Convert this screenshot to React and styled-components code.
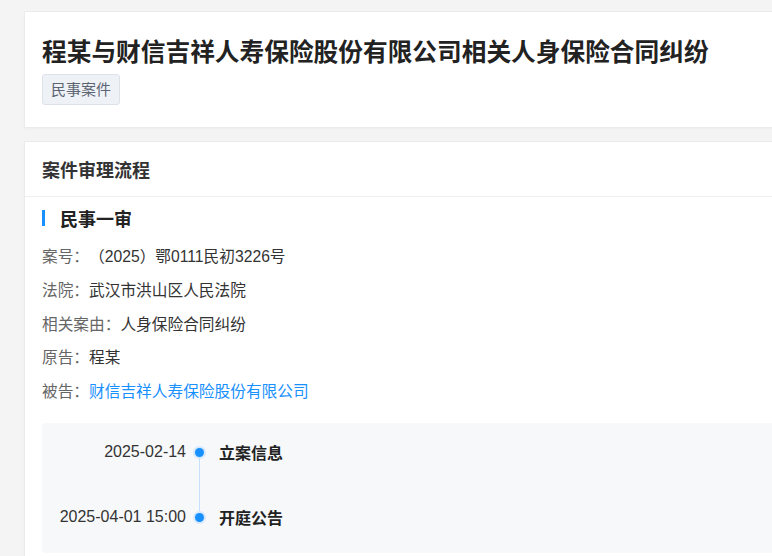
import React from "react";
import styled, { createGlobalStyle } from "styled-components";

const GlobalStyle = createGlobalStyle`
  html, body {
    margin: 0;
    padding: 0;
    background: #f4f4f4;
    overflow: hidden;
    font-family: "Liberation Sans", "Noto Sans CJK SC", sans-serif;
    color: #333;
  }
`;

const Page = styled.div`
  width: 820px;
  padding: 11px 0 0 24px;
  display: flex;
  flex-direction: column;
  gap: 13px;
`;

const Card = styled.section`
  background: #fff;
  border: 1px solid #ebebeb;
  box-shadow: 0 1px 2px rgba(0, 0, 0, 0.03);
`;

const TitleBlock = styled.div`
  padding: 24px 17px 22px;
  display: flex;
  flex-direction: column;
  align-items: flex-start;
  gap: 4px;
`;

const CaseTitle = styled.h1`
  margin: 0;
  font-size: 24.7px;
  line-height: 34px;
  font-weight: 700;
  color: #222;
`;

const Tag = styled.span`
  display: inline-block;
  padding: 0 8px;
  height: 29px;
  line-height: 29px;
  font-size: 15px;
  color: #5d6573;
  background: #eef1f6;
  border: 1px solid #dde2ea;
  border-radius: 3px;
`;

const CardHeader = styled.div`
  height: 53px;
  padding: 0 17px 1px;
  display: flex;
  align-items: center;
  font-size: 18px;
  font-weight: 700;
  color: #333;
  border-bottom: 1px solid #efefef;
`;

const CardBody = styled.div`
  padding: 9px 0 20px 17px;
`;

const StageTitle = styled.h2`
  margin: 0;
  height: 24px;
  display: flex;
  align-items: center;
  gap: 15px;
  font-size: 18px;
  font-weight: 700;
  color: #222;

  &::before {
    content: "";
    width: 3px;
    height: 16px;
    background: #1890ff;
  }
`;

const InfoList = styled.dl`
  margin: 9px 0 0;
  display: flex;
  flex-direction: column;
`;

const InfoRow = styled.div`
  display: flex;
  height: 33.7px;
  align-items: center;
  font-size: 15.7px;
`;

const Label = styled.dt`
  color: #666;
`;

const Value = styled.dd`
  margin: 0;
  color: ${(p) => (p.$link ? "#1890ff" : "#333")};
`;

const Timeline = styled.div`
  margin-top: 16px;
  background: #f7f8fa;
  border-radius: 3px;
  padding: 17px 0 26px;
  display: flex;
  flex-direction: column;
  gap: 43px;
`;

const Event = styled.div`
  display: grid;
  grid-template-columns: 144px 26px auto;
  align-items: center;
  height: 22px;
`;

const EventDate = styled.span`
  text-align: right;
  font-size: 16px;
  color: #333;
`;

const Dot = styled.span`
  justify-self: center;
  width: 9px;
  height: 9px;
  border-radius: 50%;
  background: #1890ff;
  box-shadow: 0 0 0 2px #d7e9ff;
  position: relative;
  z-index: 1;

  &::after {
    content: "";
    display: ${(p) => (p.$last ? "none" : "block")};
    position: absolute;
    left: 4px;
    top: 9px;
    width: 1px;
    height: 56px;
    background: #c6e0ff;
  }
`;

const EventName = styled.span`
  padding-left: 7px;
  font-size: 16px;
  font-weight: 700;
  color: #222;
`;

const info = [
  { label: "案号：", value: "（2025）鄂0111民初3226号" },
  { label: "法院：", value: "武汉市洪山区人民法院" },
  { label: "相关案由：", value: "人身保险合同纠纷" },
  { label: "原告：", value: "程某" },
  { label: "被告：", value: "财信吉祥人寿保险股份有限公司", link: true },
];

const events = [
  { date: "2025-02-14", name: "立案信息" },
  { date: "2025-04-01 15:00", name: "开庭公告" },
];

export default function App() {
  return (
    <>
      <GlobalStyle />
      <Page>
        <Card>
          <TitleBlock>
            <CaseTitle>程某与财信吉祥人寿保险股份有限公司相关人身保险合同纠纷</CaseTitle>
            <Tag>民事案件</Tag>
          </TitleBlock>
        </Card>
        <Card>
          <CardHeader>案件审理流程</CardHeader>
          <CardBody>
            <StageTitle>民事一审</StageTitle>
            <InfoList>
              {info.map((row) => (
                <InfoRow key={row.label}>
                  <Label>{row.label}</Label>
                  <Value $link={row.link}>{row.value}</Value>
                </InfoRow>
              ))}
            </InfoList>
            <Timeline>
              {events.map((ev, i) => (
                <Event key={ev.date}>
                  <EventDate>{ev.date}</EventDate>
                  <Dot $last={i === events.length - 1} />
                  <EventName>{ev.name}</EventName>
                </Event>
              ))}
            </Timeline>
          </CardBody>
        </Card>
      </Page>
    </>
  );
}
